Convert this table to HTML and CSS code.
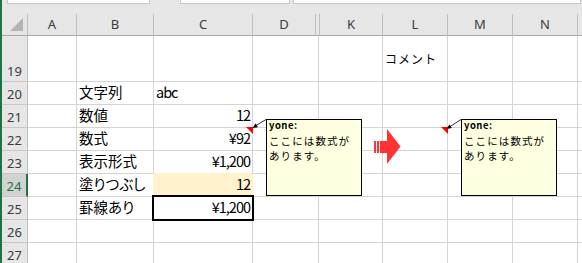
FILE: index.html
```html
<!DOCTYPE html>
<html lang="ja">
<head>
<meta charset="utf-8">
<title>コメント</title>
<link rel="stylesheet" href="styles.css">
</head>
<body>
<div class="app">
  <div class="edge"></div>
  <div class="main">
    <div class="toolbar">
      <div class="box namebox"></div>
      <div class="box fxbox"></div>
      <div class="box formula"></div>
    </div>
    <div class="sheet">
      <div class="c ch corner"><svg width="25" height="21" viewBox="0 0 25 21"><polygon points="21,4 21,17 8,17" fill="#b4b4b4"/></svg></div>
      <div class="c ch">A</div>
      <div class="c ch">B</div>
      <div class="c ch">C</div>
      <div class="c ch">D</div>
      <div class="c ch"></div>
      <div class="c ch">K</div>
      <div class="c ch">L</div>
      <div class="c ch">M</div>
      <div class="c ch">N</div>
      <div class="c ch"></div>

      <div class="c rh">19</div>
      <div class="c"></div><div class="c"></div><div class="c"></div><div class="c dd"></div><div class="c hid"></div>
      <div class="c"></div><div class="c mid">コメント</div><div class="c"></div><div class="c"></div><div class="c"></div>

      <div class="c rh">20</div>
      <div class="c"></div><div class="c">文字列</div><div class="c num">abc</div><div class="c dd"></div><div class="c hid"></div>
      <div class="c"></div><div class="c"></div><div class="c"></div><div class="c"></div><div class="c"></div>

      <div class="c rh">21</div>
      <div class="c"></div><div class="c">数値</div><div class="c r num">12</div><div class="c dd"></div><div class="c hid"></div>
      <div class="c"></div><div class="c"></div><div class="c"></div><div class="c"></div><div class="c"></div>

      <div class="c rh">22</div>
      <div class="c"></div><div class="c">数式</div><div class="c r num">¥92</div><div class="c dd"></div><div class="c hid"></div>
      <div class="c"></div><div class="c"></div><div class="c"></div><div class="c"></div><div class="c"></div>

      <div class="c rh">23</div>
      <div class="c"></div><div class="c">表示形式</div><div class="c r num">¥1,200</div><div class="c dd"></div><div class="c hid"></div>
      <div class="c"></div><div class="c"></div><div class="c"></div><div class="c"></div><div class="c"></div>

      <div class="c rh sel">24</div>
      <div class="c"></div><div class="c">塗りつぶし</div><div class="c r num fill">12</div><div class="c dd"></div><div class="c hid"></div>
      <div class="c"></div><div class="c"></div><div class="c"></div><div class="c"></div><div class="c"></div>

      <div class="c rh">25</div>
      <div class="c"></div><div class="c">罫線あり</div><div class="c r num thick">¥1,200</div><div class="c dd"></div><div class="c hid"></div>
      <div class="c"></div><div class="c"></div><div class="c"></div><div class="c"></div><div class="c"></div>

      <div class="c rh">26</div>
      <div class="c"></div><div class="c"></div><div class="c"></div><div class="c dd"></div><div class="c hid"></div>
      <div class="c"></div><div class="c"></div><div class="c"></div><div class="c"></div><div class="c"></div>

      <div class="c rh">27</div>
      <div class="c"></div><div class="c"></div><div class="c"></div><div class="c dd"></div><div class="c hid"></div>
      <div class="c"></div><div class="c"></div><div class="c"></div><div class="c"></div><div class="c"></div>
    </div>
  </div>

  <svg class="overlay" width="582" height="263" viewBox="0 0 582 263">
    <polygon points="246,127 253,127 253,134" fill="#ff0000"/>
    <polygon points="441,127 448,127 448,134" fill="#ff0000"/>
    <line x1="256" y1="125.5" x2="266" y2="119.5" stroke="#333" stroke-width="1"/>
    <polygon points="252.5,128 257.9,127.2 255.6,123.5" fill="#000"/>
    <line x1="450.5" y1="126.3" x2="461" y2="119.5" stroke="#333" stroke-width="1"/>
    <polygon points="446.5,129 451.9,128 449.4,124.4" fill="#000"/>
    <g fill="#ff3333">
      <rect x="374" y="141" width="2" height="12"/>
      <rect x="377" y="141" width="2" height="12"/>
      <rect x="380" y="141" width="8" height="12"/>
      <polygon points="387,129 400.5,146.5 387,164"/>
    </g>
  </svg>

  <div class="note note1">
    <div class="author">yone:</div>
    <div class="ntext">ここには数式が</div>
    <div class="ntext">あります。</div>
  </div>
  <div class="note note2">
    <div class="author">yone:</div>
    <div class="ntext">ここには数式が</div>
    <div class="ntext">あります。</div>
  </div>
</div>
</body>
</html>
```

FILE: styles.css
```css
body {
  margin: 0;
  width: 582px;
  height: 263px;
  overflow: hidden;
  background: #ffffff;
  font-family: "Noto Sans CJK JP", sans-serif;
}

.app {
  position: relative;
  display: flex;
  width: 582px;
  height: 263px;
  overflow: hidden;
}

.edge {
  flex: none;
  width: 2px;
  background: #217346;
}

.main {
  flex: 1;
  min-width: 0;
  display: flex;
  flex-direction: column;
}

.toolbar {
  flex: none;
  height: 14px;
  background: #e6e6e6;
  display: flex;
  align-items: flex-start;
}

.box {
  box-sizing: border-box;
  height: 4px;
  background: #ffffff;
  border: 1px solid #c6c6c6;
  border-top: none;
}

.namebox { margin-left: 5px; width: 143px; }
.fxbox { margin-left: 30px; width: 110px; }
.formula { margin-left: 3px; width: 288px; }

.sheet {
  display: grid;
  grid-template-columns: 26px 49px 77px 99px 63px 4px 63px 65px 65px 65px 1fr;
  grid-template-rows: 22px 46px repeat(8, 23px);
}

.c {
  box-sizing: border-box;
  min-width: 0;
  display: flex;
  align-items: flex-end;
  padding: 0 2px 3px;
  border-right: 1px solid #d4d4d4;
  border-bottom: 1px solid #d4d4d4;
  font-size: 14.5px;
  line-height: 18px;
  color: #000000;
  white-space: nowrap;
  font-feature-settings: "palt";
}

.ch {
  background: #e6e6e6;
  border-right-color: #bfbfbf;
  border-bottom-color: #a6a6a6;
  align-items: center;
  justify-content: center;
  padding: 0 0 1px;
  font-family: "Noto Sans", sans-serif;
  font-size: 13px;
  line-height: 20px;
  color: #3c3c3c;
  font-feature-settings: normal;
}

.corner {
  padding: 0;
  align-items: flex-start;
  justify-content: flex-start;
}

.corner svg { display: block; }

.rh {
  background: #e6e6e6;
  border-right-color: #bfbfbf;
  border-bottom-color: #c8c8c8;
  justify-content: center;
  padding: 0 0 2px;
  font-family: "Noto Sans", sans-serif;
  font-size: 13px;
  line-height: 15px;
  color: #3c3c3c;
  font-feature-settings: normal;
}

.rh.sel {
  background: #d2d2d2;
  color: #217346;
  border-right: 2px solid #217346;
}

.dd { border-right: none; }

.hid {
  border-right: none;
  padding: 0;
  background: linear-gradient(to right, transparent 2px, #d4d4d4 2px, #d4d4d4 3px, transparent 3px);
}

.r { justify-content: flex-end; }

.num {
  letter-spacing: -1px;
  font-feature-settings: normal;
}

.mid {
  align-items: center;
  padding: 0 2px;
  font-size: 12px;
  line-height: 14px;
  letter-spacing: 1px;
  font-feature-settings: normal;
}

.fill {
  background: #fff2cc;
  border-color: #fff2cc;
  box-shadow: -1px -1px 0 #fff2cc;
}

.thick { position: relative; }

.thick::after {
  content: "";
  position: absolute;
  left: -2px;
  top: -2px;
  right: -2px;
  bottom: -2px;
  border: 2px solid #000000;
}

.overlay {
  position: absolute;
  left: 0;
  top: 0;
  pointer-events: none;
}

.note {
  position: absolute;
  top: 119px;
  box-sizing: border-box;
  width: 96px;
  height: 77px;
  padding: 0 2px;
  border: 1px solid #000000;
  background: #ffffe1;
  color: #000000;
  white-space: nowrap;
}

.note1 { left: 266px; }
.note2 { left: 461px; }

.author {
  margin-top: -1px;
  font-size: 9.5px;
  font-weight: bold;
  line-height: 13.8px;
  letter-spacing: 0.5px;
}

.ntext {
  font-size: 10.5px;
  line-height: 15.2px;
  letter-spacing: 1.1px;
}
```
